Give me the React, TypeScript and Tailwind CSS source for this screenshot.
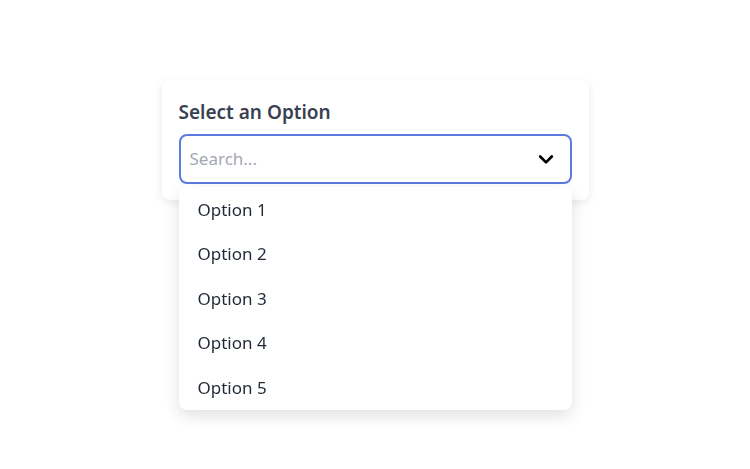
import { useState } from "react";

const options = ["Option 1", "Option 2", "Option 3", "Option 4", "Option 5"];

export default function App() {
  const [query, setQuery] = useState("");

  return (
    <div
      className="min-h-screen bg-white flex justify-center pt-[80px]"
      style={{ fontFamily: '"Noto Sans", "Open Sans", sans-serif' }}
    >
      {/* Card */}
      <div className="w-[427px] h-[120px] bg-white rounded-lg shadow-[0_3px_10px_rgba(0,0,0,0.09)] px-[17px] pt-[18px]">
        <label className="block text-[19px] leading-[28px] font-semibold text-[#374151] mb-[8px]">
          Select an Option
        </label>

        <div className="relative">
          <div className="flex items-center h-[50px] border-2 border-[#5b7be0] rounded-lg pl-[9px] pr-[14px]">
            <input
              autoFocus
              value={query}
              onChange={(e) => setQuery(e.target.value)}
              placeholder="Search..."
              className="flex-1 text-[17px] text-gray-800 placeholder:text-[#a3a8b3] outline-none bg-transparent"
            />
            <svg
              className="w-[20px] h-[20px] text-black"
              fill="none"
              stroke="currentColor"
              strokeWidth={3.2}
              viewBox="0 0 24 24"
            >
              <path strokeLinecap="round" strokeLinejoin="round" d="M5 9l7 7 7-7" />
            </svg>
          </div>

          {/* Dropdown */}
          <ul className="absolute left-0 right-0 top-[53px] bg-white rounded-lg shadow-[0_6px_16px_rgba(0,0,0,0.12)] z-10">
            {options.map((o) => (
              <li
                key={o}
                className="h-[44.5px] flex items-center px-[19px] text-[17px] text-[#1f2937]"
              >
                {o}
              </li>
            ))}
          </ul>
        </div>
      </div>
    </div>
  );
}
